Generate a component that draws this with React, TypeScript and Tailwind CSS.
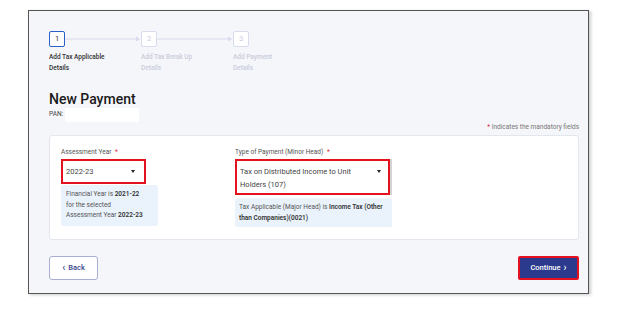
const font = { fontFamily: "Roboto, 'Liberation Sans', sans-serif" };

function StepBox({ n, active }: { n: number; active?: boolean }) {
  return (
    <div
      className={
        active
          ? "w-[16px] h-[16px] rounded-[2px] border-[1.5px] border-[#2a5fc8] bg-white flex items-center justify-center text-[7.5px] text-[#333]"
          : "w-[16px] h-[16px] rounded-[2px] border border-[#d9dbef] bg-white flex items-center justify-center text-[7.5px] text-[#c9cce0]"
      }
    >
      {n}
    </div>
  );
}

function StepLine() {
  return (
    <svg width="76" height="16" viewBox="0 0 76 16">
      <line x1="0" y1="8" x2="74" y2="8" stroke="#d8daee" strokeWidth="1" />
      <polygon points="71,5.5 75,8 71,10.5" fill="#d8daee" />
    </svg>
  );
}

function Caret() {
  return (
    <svg width="4" height="3" viewBox="0 0 4 3">
      <polygon points="0,0 4,0 2,3" fill="#222" />
    </svg>
  );
}

export default function App() {
  return (
    <div className="w-[618px] h-[320px] bg-white pt-[10px] pl-[28px]" style={font}>
      <div className="w-[561px] h-[284px] border border-[#555] bg-[#f5f6fa] pl-[20px] pr-[9px] pt-[20px] shadow-[2px_1px_3px_rgba(0,0,0,0.2)]">
        {/* stepper */}
        <div className="flex items-center">
          <StepBox n={1} active />
          <StepLine />
          <StepBox n={2} />
          <StepLine />
          <StepBox n={3} />
        </div>
        <div className="flex mt-[5px] text-[6.5px] leading-[11px] font-medium">
          <p className="w-[92px] text-[#333]">
            Add Tax Applicable
            <br />
            Details
          </p>
          <p className="w-[92px] text-[#c9ccdc]">
            Add Tax Break Up
            <br />
            Details
          </p>
          <p className="w-[92px] text-[#c9ccdc]">
            Add Payment
            <br />
            Details
          </p>
        </div>

        {/* title */}
        <h1 className="mt-[16px] text-[14px] leading-[18px] font-medium text-[#1a1a1a]">New Payment</h1>
        <div className="flex items-center h-[14px]">
          <span className="text-[6.5px] text-[#444]">PAN:</span>
          <div className="ml-[2px] w-[74px] h-[14px] bg-white" />
        </div>
        <p className="h-[10px] leading-[10px] text-right text-[6.5px] text-[#777]">
          <span className="text-[#e0303a]">*</span> Indicates the mandatory fields
        </p>

        {/* card */}
        <div className="mt-[3px] h-[105px] bg-white border border-[#e4e6ee] rounded-[3px] pl-[11px] pt-[11px] flex">
          <div className="w-[174px]">
            <p className="text-[6.5px] leading-[10px] text-[#555]">
              Assessment Year <span className="text-[#e0303a] ml-[2px]">*</span>
            </p>
            <div className="mt-[2px] w-[85px] h-[25px] border-2 border-[#e3121e] bg-white flex items-center justify-between pl-[3px] pr-[9px]">
              <span className="text-[7.5px] text-[#444]">2022-23</span>
              <Caret />
            </div>
            <div className="mt-[1px] w-[97px] h-[41px] bg-[#eaf2fc] rounded-[2px] pl-[5px] pt-[4px] text-[6.5px] leading-[10.5px] text-[#555]">
              Financial Year is <b className="text-[#333] font-semibold">2021-22</b>
              <br />
              for the selected
              <br />
              Assessment Year <b className="text-[#333] font-semibold">2022-23</b>
            </div>
          </div>
          <div>
            <p className="text-[6.5px] leading-[10px] text-[#555]">
              Type of Payment (Minor Head) <span className="text-[#e0303a] ml-[2px]">*</span>
            </p>
            <div className="mt-[2px] w-[155px] h-[36px] border-2 border-[#e3121e] bg-white flex justify-between pl-[3px] pr-[7px] pt-[4px] shadow-[2px_0_0_#d4d4d4]">
              <span className="text-[7.5px] leading-[13px] text-[#444]">
                Tax on Distributed Income to Unit
                <br />
                Holders (107)
              </span>
              <div className="pt-[5px]">
                <Caret />
              </div>
            </div>
            <div className="mt-[3px] w-[157px] h-[29px] bg-[#eaf2fc] rounded-[2px] pl-[4px] pt-[4px] text-[6.5px] leading-[10.5px] text-[#555]">
              Tax Applicable (Major Head) is <b className="text-[#333] font-semibold">Income Tax (Other</b>
              <br />
              <b className="text-[#333] font-semibold">than Companies)(0021)</b>
            </div>
          </div>
        </div>

        {/* buttons */}
        <div className="mt-[16px] flex justify-between">
          <button className="w-[49px] h-[24px] border border-[#a9aed6] rounded-[3px] bg-white text-[7.5px] font-medium text-[#3b4690] flex items-center justify-center gap-[3px]">
            <span className="text-[10px] leading-none">‹</span>
            Back
          </button>
          <button className="w-[61px] h-[24px] border-2 border-[#e3121e] rounded-[2px] bg-[#2b3a8c] text-[7.5px] font-medium text-white flex items-center justify-center gap-[3px]">
            Continue
            <span className="text-[10px] leading-none">›</span>
          </button>
        </div>
      </div>
    </div>
  );
}
